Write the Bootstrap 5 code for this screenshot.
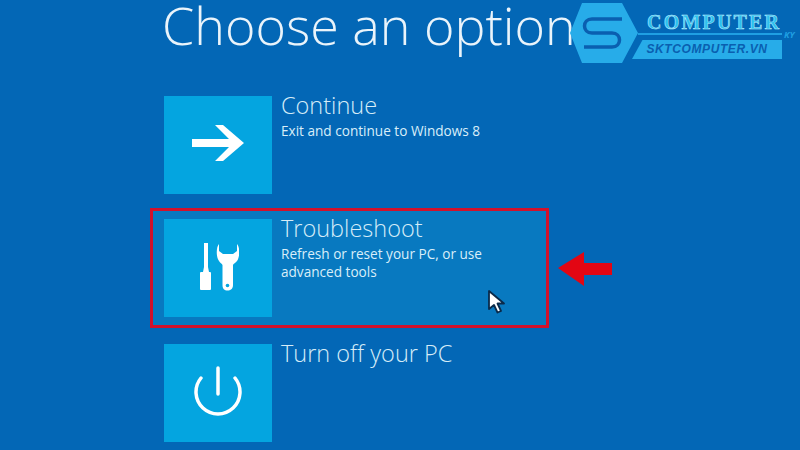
<!DOCTYPE html>
<html lang="en">
<head>
    <meta charset="UTF-8">
    <meta name="viewport" content="width=device-width, initial-scale=1.0">
    <title>Choose an option</title>
    <link href="https://cdn.jsdelivr.net/npm/bootstrap@5.3.0/dist/css/bootstrap.min.css" rel="stylesheet">
    <style>
        body {
            background-color: #0367b6;
            width: 800px;
            height: 450px;
            overflow: hidden;
            font-family: "Open Sans", "Liberation Sans", sans-serif;
            color: #fff;
        }
        .screen {
            position: relative;
            width: 800px;
            height: 450px;
            overflow: hidden;
            padding-left: 150px;
        }
        .page-title {
            font-size: 52px;
            font-weight: 300;
            line-height: 50px;
            height: 85px;
            margin: 0 0 0 12px;
            color: #eaf4fb;
            white-space: nowrap;
        }
        .option-list {
            width: 399px;
        }
        .option-row {
            border: 3px solid transparent;
            padding: 8px 11px;
            gap: 9px;
            height: 120px;
        }
        .option-row.picked {
            border-color: #d3112b;
            background-color: #0879c0;
            margin-top: 3px;
            margin-bottom: 5px;
        }
        .tile {
            flex: 0 0 108px;
            height: 98px;
            background-color: #04a5e0;
        }
        .option-name {
            font-size: 23.5px;
            font-weight: 300;
            line-height: 24px;
            color: #d5ecf8;
            margin-top: -3px;
        }
        .option-text {
            font-size: 13.6px;
            line-height: 18px;
            font-weight: 400;
            color: #d9eef9;
            margin-top: 5px;
            white-space: nowrap;
        }
        .red-arrow {
            position: absolute;
            left: 557px;
            top: 250px;
        }
        .mouse-arrow {
            position: absolute;
            left: 487px;
            top: 289px;
        }
        .logo-box {
            position: absolute;
            left: 570px;
            top: 3px;
            width: 230px;
            height: 62px;
        }
        .logo-hex {
            position: absolute;
            left: 0;
            top: 0;
        }
        .logo-word {
            position: absolute;
            left: 77px;
            top: 9px;
            font-family: "Liberation Serif", serif;
            font-weight: 700;
            font-size: 20px;
            line-height: 20px;
            letter-spacing: 2.2px;
            color: #2cc0ee;
            -webkit-text-stroke: .5px #bfeeff;
        }
        .logo-line {
            position: absolute;
            left: 68px;
            top: 30px;
            width: 144px;
            height: 2px;
            background-color: #1f9fe2;
        }
        .logo-ky {
            position: absolute;
            left: 214px;
            top: 27px;
            font-size: 9px;
            line-height: 10px;
            font-style: italic;
            font-weight: 700;
            color: #1f9fe2;
        }
        .logo-band {
            position: absolute;
            left: 62px;
            top: 37px;
            width: 150px;
            height: 19px;
            background-color: #27ace9;
            clip-path: polygon(7% 0, 100% 0, 100% 100%, 0 100%);
            text-align: center;
            font-family: "Liberation Sans", sans-serif;
            font-weight: 700;
            font-style: italic;
            font-size: 12px;
            line-height: 19px;
            letter-spacing: .6px;
            color: #0a5fb0;
        }
    </style>
</head>
<body>
    <div class="screen">
        <h1 class="page-title">Choose an option</h1>

        <div class="option-list d-flex flex-column">
            <!-- Continue -->
            <div class="option-row d-flex">
                <div class="tile d-flex align-items-center justify-content-center">
                    <svg width="54" height="40" viewBox="0 0 54 40">
                        <path d="M24 0h8l21 18-21 18h-8l14-14H1v-8h37z" fill="#fff"/>
                    </svg>
                </div>
                <div>
                    <div class="option-name">Continue</div>
                    <div class="option-text">Exit and continue to Windows 8</div>
                </div>
            </div>

            <!-- Troubleshoot -->
            <div class="option-row picked d-flex">
                <div class="tile d-flex align-items-center justify-content-center">
                    <svg width="42" height="50" viewBox="0 0 42 50">
                        <path d="M7 0h4v24l1 5H6l1-5z" fill="#fff"/>
                        <rect x="3" y="29" width="11" height="18" rx="1" fill="#fff"/>
                        <path d="M22 1C19 4 19 14 22 18c1 2 3 2.500 3.500 4v20c0 4 2 5.500 5 5.500s5.500-1.500 5.500-5.500V22c.5-1.500 2.500-2 4-4 3-4 3-14 0-17v7l-4 3H26l-4-3z" fill="#fff"/>
                        <circle cx="30.500" cy="42.500" r="1.800" fill="#04a5e0"/>
                    </svg>
                </div>
                <div>
                    <div class="option-name">Troubleshoot</div>
                    <div class="option-text">Refresh or reset your PC, or use<br>advanced tools</div>
                </div>
            </div>

            <!-- Turn off -->
            <div class="option-row d-flex">
                <div class="tile d-flex align-items-center justify-content-center">
                    <svg width="48" height="56" viewBox="0 0 48 56">
                        <path d="M7 13a22 22 0 1 0 34 0" fill="none" stroke="#fff" stroke-width="3.500" stroke-linecap="round"/>
                        <path d="M24 3v26" fill="none" stroke="#fff" stroke-width="3.500" stroke-linecap="round"/>
                    </svg>
                </div>
                <div>
                    <div class="option-name">Turn off your PC</div>
                </div>
            </div>
        </div>

        <!-- red pointer -->
        <svg class="red-arrow" width="55" height="38" viewBox="0 0 55 38">
            <path d="M1 18 27 2v11h28v12H27v11z" fill="#e30613"/>
        </svg>

        <!-- mouse cursor -->
        <svg class="mouse-arrow" width="20" height="26" viewBox="0 0 20 26">
            <path d="M2 2v18l5-4 3.500 7.500 3.500-1.500-3.500-7.500H17z" fill="#fff" stroke="#0a2a4a" stroke-width="1.800" stroke-linejoin="round"/>
        </svg>

        <!-- logo -->
        <div class="logo-box">
            <svg class="logo-hex" width="70" height="62" viewBox="0 0 70 62">
                <path d="M12 0h40l16 30-16 30H12L0 30z" fill="#27ace9"/>
                <path d="M52 16H22c-10 0-10 14 0 14h20c10 0 10 14 0 14H14" fill="none" stroke="#0a5fb0" stroke-width="3.500"/>
            </svg>
            <div class="logo-word">COMPUTER</div>
            <div class="logo-line"></div>
            <div class="logo-ky">KY</div>
            <div class="logo-band">SKTCOMPUTER.VN</div>
        </div>
    </div>

    <script src="https://cdn.jsdelivr.net/npm/bootstrap@5.3.0/dist/js/bootstrap.bundle.min.js"></script>
</body>
</html>
